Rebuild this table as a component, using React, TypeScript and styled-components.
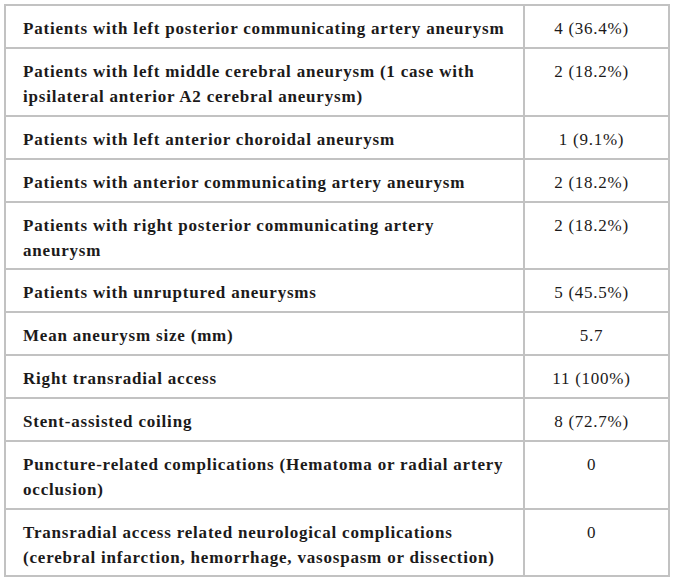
import React from "react";
import styled, { createGlobalStyle } from "styled-components";

const Global = createGlobalStyle`
  html, body { margin: 0; padding: 0; background: #ffffff; }
  body { font-family: "Liberation Serif", "Times New Roman", serif; color: #1c1a1a; }
`;

const Page = styled.div`
  padding: 4px 0 0 4px;
`;

const Table = styled.table`
  border-collapse: collapse;
  width: 666px;
  border: 2px solid #c2c2c2;
`;

const Row = styled.tr<{ $tall?: boolean }>`
  height: ${(p) => (p.$tall ? 67.5 : 43)}px;
`;

const Label = styled.td`
  width: 519px;
  box-sizing: border-box;
  border: 2px solid #c2c2c2;
  padding: 10px 8px 5px 17px;
  font-weight: 700;
  font-size: 17px;
  letter-spacing: 0.8px;
  line-height: 25px;
  vertical-align: top;
  text-align: left;
  white-space: nowrap;
`;

const Value = styled.td`
  border: 2px solid #c2c2c2;
  padding: 10px 14px 5px 4px;
  font-size: 17px;
  letter-spacing: 0.75px;
  line-height: 25px;
  vertical-align: top;
  text-align: center;
`;

type Item = { label: React.ReactNode; value: string; tall?: boolean };

const items: Item[] = [
  { label: "Patients with left posterior communicating artery aneurysm", value: "4 (36.4%)" },
  {
    label: (
      <>
        Patients with left middle cerebral aneurysm (1 case with
        <br />
        ipsilateral anterior A2 cerebral aneurysm)
      </>
    ),
    value: "2 (18.2%)",
    tall: true,
  },
  { label: "Patients with left anterior choroidal aneurysm", value: "1 (9.1%)" },
  { label: "Patients with anterior communicating artery aneurysm", value: "2 (18.2%)" },
  {
    label: (
      <>
        Patients with right posterior communicating artery
        <br />
        aneurysm
      </>
    ),
    value: "2 (18.2%)",
    tall: true,
  },
  { label: "Patients with unruptured aneurysms", value: "5 (45.5%)" },
  { label: "Mean aneurysm size (mm)", value: "5.7" },
  { label: "Right transradial access", value: "11 (100%)" },
  { label: "Stent-assisted coiling", value: "8 (72.7%)" },
  {
    label: (
      <>
        Puncture-related complications (Hematoma or radial artery
        <br />
        occlusion)
      </>
    ),
    value: "0",
    tall: true,
  },
  {
    label: (
      <>
        Transradial access related neurological complications
        <br />
        (cerebral infarction, hemorrhage, vasospasm or dissection)
      </>
    ),
    value: "0",
    tall: true,
  },
];

export default function App() {
  return (
    <>
      <Global />
      <Page>
        <Table>
          <tbody>
            {items.map((it, i) => (
              <Row key={i} $tall={it.tall}>
                <Label>{it.label}</Label>
                <Value>{it.value}</Value>
              </Row>
            ))}
          </tbody>
        </Table>
      </Page>
    </>
  );
}
